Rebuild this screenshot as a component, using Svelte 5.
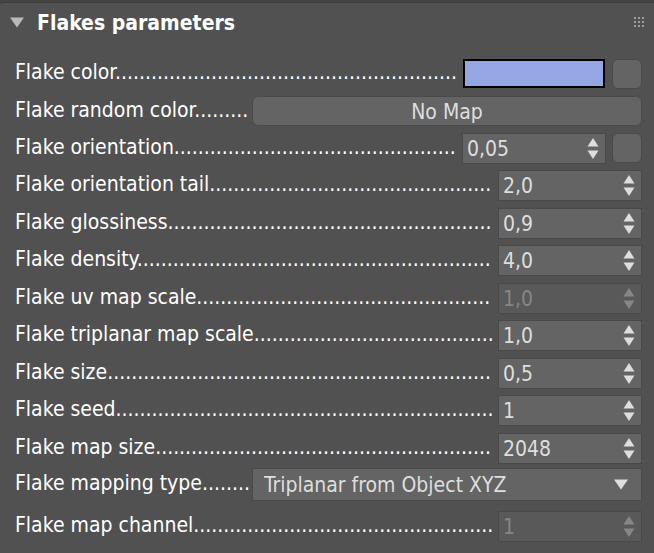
<script>
  const rows = $state([
    { id: 'color', label: 'Flake color', dots: 57, kind: 'color', map: true },
    { id: 'random', label: 'Flake random color', dots: 9, kind: 'button', text: 'No Map' },
    { id: 'orientation', label: 'Flake orientation', dots: 47, kind: 'spin', value: '0,05', map: true },
    { id: 'tail', label: 'Flake orientation tail', dots: 47, kind: 'spin', value: '2,0' },
    { id: 'gloss', label: 'Flake glossiness', dots: 54, kind: 'spin', value: '0,9' },
    { id: 'density', label: 'Flake density', dots: 59, kind: 'spin', value: '4,0' },
    { id: 'uv', label: 'Flake uv map scale', dots: 49, kind: 'spin', value: '1,0', off: true },
    { id: 'triplanar', label: 'Flake triplanar map scale', dots: 40, kind: 'spin', value: '1,0' },
    { id: 'size', label: 'Flake size', dots: 64, kind: 'spin', value: '0,5' },
    { id: 'seed', label: 'Flake seed', dots: 63, kind: 'spin', value: '1' },
    { id: 'mapsize', label: 'Flake map size', dots: 56, kind: 'spin', value: '2048' },
    { id: 'mapping', label: 'Flake mapping type', dots: 8, kind: 'select' },
    { id: 'channel', label: 'Flake map channel', dots: 50, kind: 'spin', value: '1', off: true }
  ]);
  let open = $state(true);

  function step(row, delta) {
    const decimals = (row.value.split(',')[1] ?? '').length;
    const next = Number(row.value.replace(',', '.')) + delta / 10 ** decimals;
    row.value = next.toFixed(decimals).replace('.', ',');
  }
</script>

<section class="rollout">
  <header>
    <button class="toggle" aria-expanded={open} onclick={() => (open = !open)}>
      <svg width="14" height="11" viewBox="0 0 14 11" aria-hidden="true"><path d="M0 0.5H14L7 10.5Z" fill="#b9b9b9" /></svg>
      <span>Flakes parameters</span>
    </button>
    <svg class="grip" width="10" height="10" viewBox="0 0 10 10" aria-hidden="true">
      {#each [0, 4, 8] as y}
        {#each [0, 4, 8] as x}
          <rect {x} {y} width="2" height="2" fill="#9c9c9c" />
        {/each}
      {/each}
    </svg>
  </header>

  {#if open}
    <div class="rows">
      {#each rows as row (row.id)}
        <div class="row {row.kind}">
          <label for={row.id}>{row.label}{'.'.repeat(row.dots)}</label>
          {#if row.kind === 'color'}
            <button class="swatch" id={row.id}></button>
          {:else if row.kind === 'button'}
            <button class="map wide" id={row.id}>{row.text}</button>
          {:else if row.kind === 'select'}
            <div class="picker">
              <select id={row.id}>
                <option>Triplanar from Object XYZ</option>
              </select>
              <svg width="14" height="11" viewBox="0 0 14 11" aria-hidden="true"><path d="M0 0.5H14L7 10.5Z" fill="#dedede" /></svg>
            </div>
          {:else}
            <div class="field" class:off={row.off}>
              <input id={row.id} type="text" bind:value={row.value} disabled={row.off} />
              <div class="arrows">
                <button aria-label="Increase {row.label}" disabled={row.off} onclick={() => step(row, 1)}>
                  <svg width="12" height="9" viewBox="0 0 12 9" aria-hidden="true"><path d="M0.5 8.5H11.5L6 0Z" /></svg>
                </button>
                <button aria-label="Decrease {row.label}" disabled={row.off} onclick={() => step(row, -1)}>
                  <svg width="12" height="9" viewBox="0 0 12 9" aria-hidden="true"><path d="M0.5 0.5H11.5L6 9Z" /></svg>
                </button>
              </div>
            </div>
          {/if}
          {#if row.map}
            <button class="map" aria-label="{row.label} map"></button>
          {/if}
        </div>
      {/each}
    </div>
  {/if}
</section>

<style>
  :global(body) {
    background: #444444;
  }
  .rollout {
    box-sizing: border-box;
    margin-top: 2px;
    padding: 0 12px 10px 15px;
    border-top: 1px solid #3c3c3c;
    border-bottom: 1px solid #444444;
    border-top-left-radius: 3px;
    background: #515151;
    color: #ffffff;
    font-family: 'DejaVu Sans Condensed', 'DejaVu Sans', sans-serif;
    font-size: 21px;
  }
  button,
  input,
  select {
    margin: 0;
    padding: 0;
    border: 0;
    background: none;
    color: inherit;
    font: inherit;
  }
  header {
    display: flex;
    align-items: center;
    justify-content: space-between;
    height: 38px;
    margin: 0 -3px 18px -5px;
  }
  .grip {
    margin-right: 1px;
  }
  .toggle {
    display: flex;
    align-items: center;
    gap: 13px;
    font-weight: bold;
    line-height: 30px;
  }
  .toggle span {
    padding-top: 2px;
  }
  svg {
    display: block;
  }
  .row {
    display: flex;
    align-items: center;
    height: 30px;
    margin-bottom: 7px;
  }
  .row:nth-child(even) {
    margin-bottom: 8px;
  }
  .row.button,
  .row.color {
    margin-bottom: 7px;
  }
  .row.color {
    align-items: flex-start;
  }
  .row.select {
    height: 34px;
    margin-bottom: 10px;
  }
  .row:nth-child(11) {
    margin-bottom: 4px;
  }
  label {
    flex: 1;
    min-width: 0;
    margin-right: 6px;
    padding-bottom: 1px;
    white-space: nowrap;
    line-height: 27px;
  }
  .swatch {
    width: 142px;
    height: 29px;
    border: 2px solid #000000;
    background: #94a7e4;
  }
  .map {
    box-sizing: border-box;
    width: 30px;
    height: 30px;
    border: 1px solid #4a4a4a;
    border-radius: 6px;
    background: #646464;
    color: #dedede;
  }
  .swatch + .map {
    margin-left: 7px;
  }
  .field + .map {
    margin-left: 6px;
  }
  .map.wide,
  .picker {
    width: 390px;
  }
  .map.wide {
    padding-top: 1px;
  }
  .field {
    display: flex;
    box-sizing: border-box;
    width: 144px;
    height: 31px;
    border: 1px solid #494949;
    background: #646464;
    color: #dedede;
  }
  .field input {
    flex: 1;
    min-width: 0;
    padding-top: 1px;
    padding-left: 4px;
    line-height: 28px;
  }
  .arrows {
    display: flex;
    flex-direction: column;
    justify-content: center;
    gap: 3px;
    padding-right: 6px;
    fill: #dedede;
  }
  .field.off {
    background: #595959;
    color: #868686;
  }
  .off .arrows {
    fill: #868686;
  }
  .picker {
    display: grid;
    align-items: center;
    box-sizing: border-box;
    height: 33px;
    border: 1px solid #494949;
    background: #646464;
    color: #dedede;
  }
  .picker > * {
    grid-area: 1 / 1;
  }
  .picker select {
    height: 31px;
    padding-top: 2px;
    padding-left: 11px;
    appearance: none;
  }
  .picker option {
    background: #646464;
  }
  .picker svg {
    justify-self: end;
    margin-right: 13px;
    pointer-events: none;
  }
</style>
